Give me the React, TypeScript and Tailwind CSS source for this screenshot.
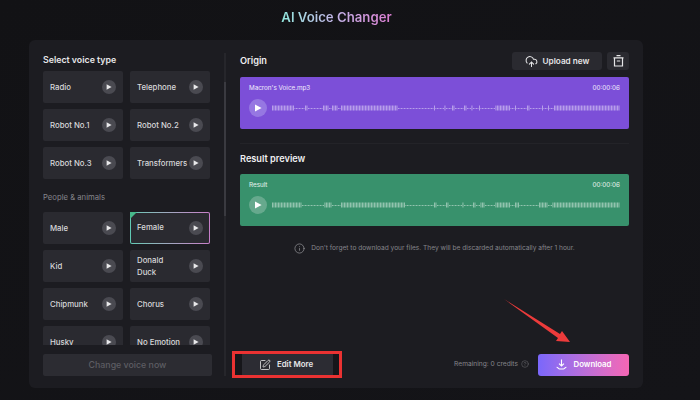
import React from 'react';
import { CloudUpload, SquarePen, Info, CircleHelp } from 'lucide-react';

type Range = [number, number];

const originDense: Range[] = [[272, 294], [304, 308], [313, 314], [322, 328], [332, 337], [340, 398], [418, 419], [434, 435], [444, 446], [452, 454], [464, 466], [471, 473], [479, 480], [495, 510], [515, 516], [527, 529], [535, 536], [542, 543], [548, 549], [553, 620]];
const resultDense: Range[] = [[272, 301], [313, 314], [324, 332], [340, 405], [434, 437], [445, 448], [462, 463], [472, 475], [480, 485], [495, 510], [515, 519], [529, 530], [538, 547], [552, 620]];

const Wave = ({ dense }: { dense: Range[] }) => {
  const bars = [];
  for (let x = 272; x < 620; x += 1.5) {
    const tall = dense.some(([a, b]) => x >= a && x < b);
    bars.push(<rect key={x} x={x - 272} y={tall ? 0.5 : 3} width="0.9" height={tall ? 5 : 1} fill="white" />);
  }
  return (
    <svg width="348" height="6" className="opacity-50 shrink-0">
      {bars}
    </svg>
  );
};

const PlayMini = () => (
  <span className="w-[14px] h-[14px] rounded-full bg-[#4a4a51] flex items-center justify-center shrink-0">
    <svg width="6" height="6" viewBox="0 0 6 6">
      <path d="M0.6 0.2 L5.6 3 L0.6 5.8 Z" fill="#e8e8ea" />
    </svg>
  </span>
);

const VoiceCard = ({ name, active }: { name: string; active?: boolean }) => {
  if (active) {
    return (
      <div className="relative h-[32px] rounded-[2px] p-px bg-gradient-to-r from-[#5fc9b4] to-[#c77ec9]">
        <div className="h-full rounded-[1px] bg-[#2a2a30] flex items-center justify-between pl-[6px] pr-[6px]">
          <span className="text-[7.8px] font-medium text-[#d8d8da]">{name}</span>
          <PlayMini />
        </div>
        <svg width="7" height="7" className="absolute left-0 top-0">
          <path d="M0 0 H7 L0 7 Z" fill="#47b98b" />
        </svg>
      </div>
    );
  }
  return (
    <div className="h-[32px] rounded-[2px] bg-[#2a2a30] flex items-center justify-between pl-[7px] pr-[7px]">
      <span className="text-[7.8px] leading-[12.5px] font-medium text-[#d8d8da] whitespace-pre-line">{name}</span>
      <PlayMini />
    </div>
  );
};

const Track = ({ title, bg, circle, dense, y }: { title: string; bg: string; circle: string; dense: Range[]; y?: string }) => (
  <div className={`h-[52px] rounded-[2px] px-[9px] pt-[6px] ${bg} ${y ?? ''}`}>
    <div className="flex justify-between text-[6.3px] leading-[10px] text-white/90">
      <span>{title}</span>
      <span>00:00:06</span>
    </div>
    <div className="flex items-center gap-[5px] mt-[6px]">
      <span className={`w-[18px] h-[18px] rounded-full flex items-center justify-center shrink-0 ${circle}`}>
        <svg width="8" height="8" viewBox="0 0 8 8">
          <path d="M1 0.4 L7.6 4 L1 7.6 Z" fill="white" />
        </svg>
      </span>
      <Wave dense={dense} />
    </div>
  </div>
);

export default function App() {
  return (
    <div className="relative w-[700px] h-[400px] overflow-hidden bg-gradient-to-br from-[#121215] to-[#141418] font-['Inter','Liberation_Sans',sans-serif]">
      <div className="h-[40px] flex items-center justify-center pb-[5px] pr-[27px]">
        <h1 className="text-[13.2px] font-semibold bg-gradient-to-r from-[#8fe6dc] via-[#c3b3e8] to-[#d97cd0] bg-clip-text text-transparent">
          AI Voice Changer
        </h1>
      </div>

      <div className="ml-[29px] w-[614px] h-[348px] rounded-[6px] bg-[#1c1c21] flex">
        {/* voice list */}
        <div className="w-[195px] pl-[14px] pt-[13px] flex flex-col shrink-0">
          <h2 className="text-[8.8px] leading-[14px] font-semibold text-[#e6e6e8]">Select voice type</h2>
          <div className="mt-[4px] h-[274px] overflow-hidden">
            <div className="grid grid-cols-[80px_80px] gap-x-[7px] gap-y-[6px]">
              <VoiceCard name="Radio" />
              <VoiceCard name="Telephone" />
              <VoiceCard name="Robot No.1" />
              <VoiceCard name="Robot No.2" />
              <VoiceCard name="Robot No.3" />
              <VoiceCard name="Transformers" />
              <div className="col-span-2 h-[21px] pt-[7px] text-[7.7px] leading-[12px] text-[#85858b]">People &amp; animals</div>
              <VoiceCard name="Male" />
              <VoiceCard name="Female" active />
              <VoiceCard name="Kid" />
              <VoiceCard name={'Donald\nDuck'} />
              <VoiceCard name="Chipmunk" />
              <VoiceCard name="Chorus" />
              <VoiceCard name="Husky" />
              <VoiceCard name="No Emotion" />
            </div>
          </div>
          <button className="mt-[9px] w-[169px] h-[22px] rounded-[2px] bg-[#2c2c32] text-[8.8px] font-medium text-[#5d5d63]">
            Change voice now
          </button>
        </div>

        {/* scrollbar */}
        <div className="mt-[13px] mb-[12px] w-[2px] bg-[#26262b] shrink-0">
          <div className="mt-[29px] h-[134px] bg-[#3a3a40]" />
        </div>

        {/* preview */}
        <div className="flex-1 pl-[14px] pr-[14px] pt-[11px] flex flex-col">
          <div className="h-[20px] flex items-center justify-between">
            <h2 className="text-[9.2px] font-semibold text-[#eeeeef]">Origin</h2>
            <div className="flex items-center gap-[5px]">
              <button className="w-[90px] h-[18px] rounded-[3px] bg-[#2a2a30] flex items-center justify-center gap-[5px] text-[8.2px] font-semibold text-[#e6e6e8]">
                <CloudUpload size={13} strokeWidth={1.9} />
                Upload new
              </button>
              <button className="w-[22px] h-[18px] rounded-[3px] bg-[#2a2a30] flex items-center justify-center">
                <svg width="11" height="12" viewBox="0 0 11 12" fill="none" stroke="#e6e6e8" strokeWidth="1.2">
                  <path d="M3.5 0.6 H7.5 M0.5 2.8 H10.5 M1.5 2.8 V11 H9.5 V2.8 M3.8 6 H7.2" />
                </svg>
              </button>
            </div>
          </div>
          <Track title="Macron's Voice.mp3" bg="bg-[#7c4fd8]" circle="bg-[#9677e2]" dense={originDense} y="mt-[6px]" />
          <div className="mt-[14px] h-[1px] bg-[#232328]" />
          <h2 className="mt-[8px] text-[9.2px] leading-[14px] font-semibold text-[#eeeeef]">Result preview</h2>
          <Track title="Result" bg="bg-[#38916c]" circle="bg-[#66a98d]" dense={resultDense} y="mt-[8px]" />
          <div className="mt-[14px] flex items-center justify-center gap-[6px] text-[6.6px] leading-[16px] text-[#85858b]">
            <Info size={11} strokeWidth={1.4} className="text-[#a0a0a5]" />
            <span>Don&apos;t forget to download your files. They will be discarded automatically after 1 hour.</span>
          </div>

          <div className="mt-auto mb-[10px] -ml-[8px] flex items-center justify-between">
            <div className="w-[110px] h-[27px] border-[3px] border-[#ea3232] bg-[#16161a] flex justify-center items-center">
              <button className="w-[91px] h-full bg-[#2c2c33] pr-[2px] flex items-center justify-center gap-[6px] text-[7.9px] font-semibold text-[#e6e6e8]">
                <SquarePen size={12} strokeWidth={1.6} />
                Edit More
              </button>
            </div>
            <div className="flex items-center gap-[9px]">
              <span className="flex items-center gap-[3px] text-[6.65px] text-[#85858b]">
                Remaining: 0 credits
                <CircleHelp size={8} strokeWidth={1.2} />
              </span>
              <button className="w-[91px] h-[22px] rounded-[3px] bg-gradient-to-r from-[#7a67fb] to-[#f566b4] flex items-center justify-center gap-[7px] text-[7.8px] font-semibold text-white">
                <svg width="11" height="11" viewBox="0 0 11 11" fill="none" stroke="white" strokeWidth="1.1">
                  <path d="M5.5 0.5 V6.8 M3 4.6 L5.5 7 L8 4.6 M0.6 8.2 C2 8.2 2.4 10 3.6 10 H7.4 C8.6 10 9 8.2 10.4 8.2" />
                </svg>
                Download
              </button>
            </div>
          </div>
        </div>
      </div>

      {/* red annotation arrow */}
      <svg width="72" height="50" viewBox="0 0 72 50" className="absolute left-[500px] top-[295px]">
        <path d="M4 4 L60 39 L62 36 L70 47 L56 46 L58 43 Z" fill="#ec3b3b" />
      </svg>
    </div>
  );
}
